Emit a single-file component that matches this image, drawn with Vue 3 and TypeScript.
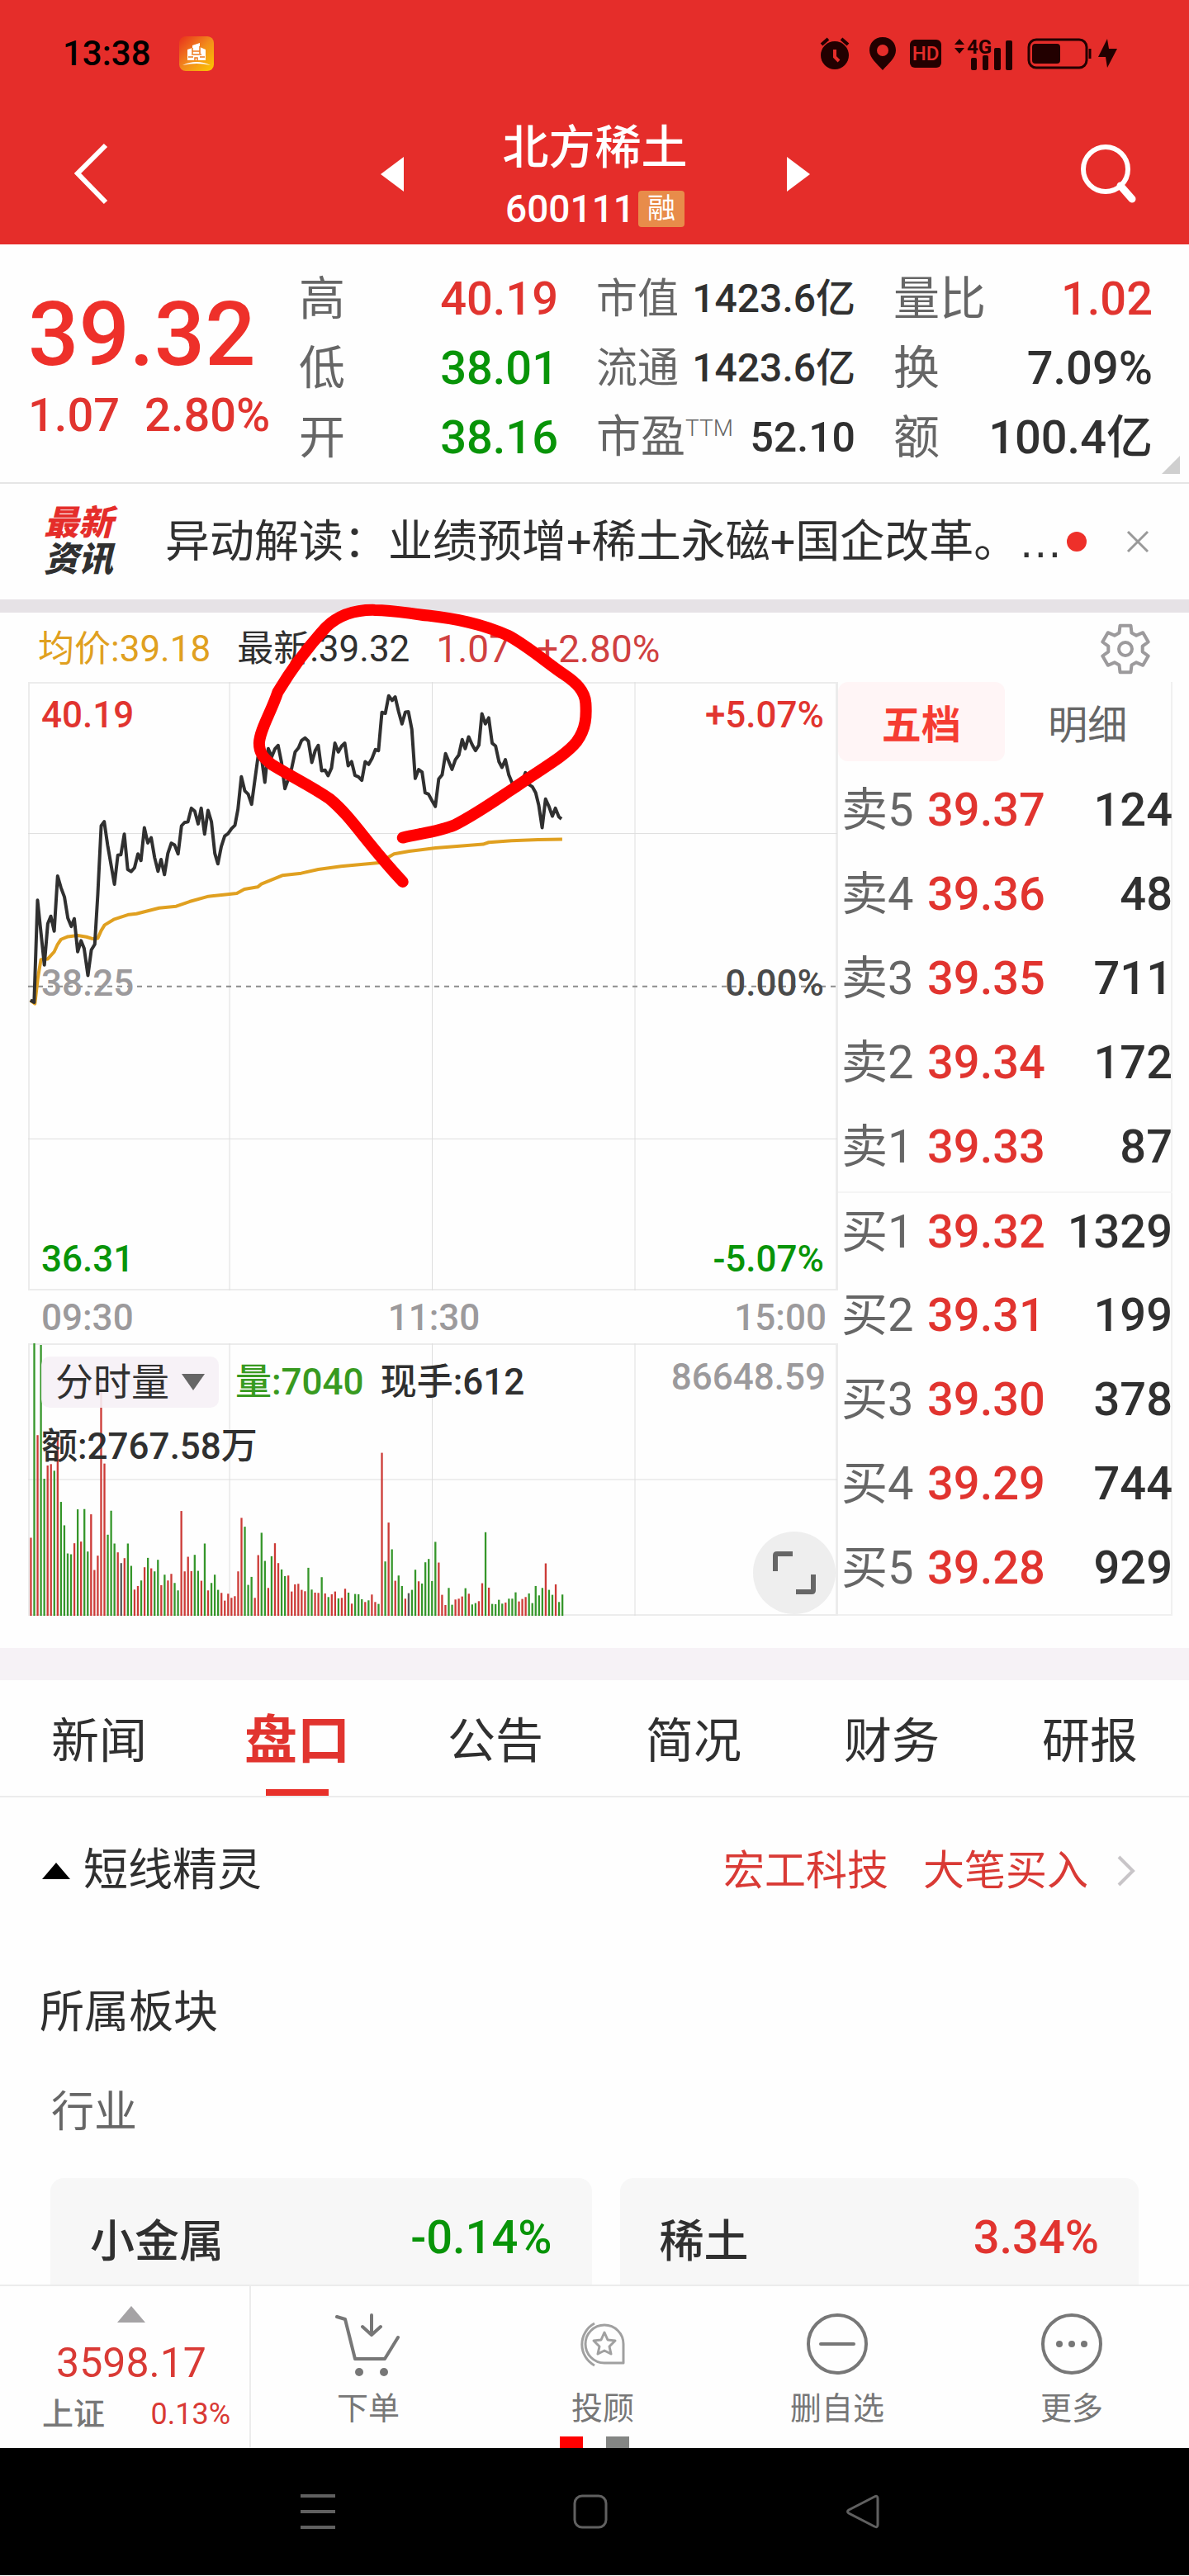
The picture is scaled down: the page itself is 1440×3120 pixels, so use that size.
<script setup lang="ts">
import { ref } from 'vue'

interface Stat { label: string; sup?: string; value: string; tone?: 'up' | 'down' }
interface Level { side: string; price: string; qty: string }

const statColumns: Stat[][] = [
  [
    { label: '高', value: '40.19', tone: 'up' },
    { label: '低', value: '38.01', tone: 'down' },
    { label: '开', value: '38.16', tone: 'down' },
  ],
  [
    { label: '市值', value: '1423.6亿' },
    { label: '流通', value: '1423.6亿' },
    { label: '市盈', sup: 'TTM', value: '52.10' },
  ],
  [
    { label: '量比', value: '1.02', tone: 'up' },
    { label: '换', value: '7.09%' },
    { label: '额', value: '100.4亿' },
  ],
]

const asks: Level[] = [
  { side: '卖5', price: '39.37', qty: '124' },
  { side: '卖4', price: '39.36', qty: '48' },
  { side: '卖3', price: '39.35', qty: '711' },
  { side: '卖2', price: '39.34', qty: '172' },
  { side: '卖1', price: '39.33', qty: '87' },
]
const bids: Level[] = [
  { side: '买1', price: '39.32', qty: '1329' },
  { side: '买2', price: '39.31', qty: '199' },
  { side: '买3', price: '39.30', qty: '378' },
  { side: '买4', price: '39.29', qty: '744' },
  { side: '买5', price: '39.28', qty: '929' },
]

const tabs = ['新闻', '盘口', '公告', '简况', '财务', '研报']
const activeTab = ref('盘口')
const bookTabs = ['五档', '明细']
const activeBook = ref('五档')

const sectors = [
  { name: '小金属', change: '-0.14%', tone: 'down' },
  { name: '稀土', change: '3.34%', tone: 'up' },
]

const priceLine = `80,1443 90,1450 99,1080 117,1315 126,1165 134,1138 143,1192 152,992 161,1035 170,1068 179,1145 188,1175
196,1147 205,1267 214,1227 222,1255 232,1353 241,1260 250,1240 258,1060 267,810 275,795 284,880 302,1022 311,916 319,915
328,840 337,968 346,976 355,962 364,912 372,936 381,817 390,872 399,853 408,925 417,975 425,932 434,987 443,910 452,873
461,880 470,912 479,810 487,798 496,795 505,746 514,757 523,803 531,746 540,840 549,754 558,795 567,910 575,948 584,885
593,847 602,838 611,820 620,808 628,750 637,632 646,683 655,695 664,732 673,640 681,560 690,560 699,652 708,530 717,560
726,530 734,518 743,580 752,675 761,640 770,600 779,542 788,527 796,500 805,491 814,503 823,580 832,537 840,518 849,610
858,608 866,628 875,600 884,510 893,542 902,520 910,510 919,592 928,577 937,627 946,632 955,645 964,577 973,587 982,565
991,533 999,537 1008,398 1017,402 1026,338 1035,355 1043,342 1052,395 1061,440 1070,397 1078,396 1087,460 1096,638
1105,606 1114,615 1122,690 1131,695 1140,718 1149,740 1158,640 1167,625 1176,548 1184,575 1193,605 1202,570 1211,553
1220,497 1228,530 1237,487 1246,515 1255,537 1264,517 1272,403 1281,440 1290,418 1299,510 1308,520 1317,577 1325,598
1334,570 1343,625 1352,655 1361,658 1370,650 1378,650 1387,617 1396,660 1405,668 1414,690 1422,735 1431,817 1440,713
1449,740 1458,775 1466,746 1475,777 1482,785`

const averageLine = `80,1443 92,1455 100,1360 108,1295 126,1293 143,1267 152,1240 161,1222 179,1212 205,1208 228,1213 245,1220
258,1218 267,1190 276,1170 300,1150 340,1132 360,1129 420,1108 465,1102 500,1085 550,1066 600,1059 625,1055 645,1040
680,1032 690,1021 745,990 795,982 840,968 900,957 1000,944 1040,912 1080,902 1150,890 1220,883 1275,877 1290,870
1350,864 1420,860 1484,859`

// One entry per trading minute: r = up, g = down, n = flat, followed by the bar's top.
const volumeBase = 1368
const volumeBars = `r1085 g380 r713 g386 g871 r823 r818 g842 r710 g955 g1040 g1142 g1145 r1105 g982 r1099 g981 g1135 r1000
r1202 r1150 r500 r816 g1074 g987 g1106 r1138 n1177 r1159 g1106 g1187 r1273 r1260 g1240 r1192 g1158 r1196 g1207 g1165
r1257 g1219 r1240 r1216 g1249 g1276 r988 r1207 r1154 r1206 g1147 g1205 r1241 g1106 r1276 g1249 g1219 g1274 r1285 r1313
r1288 r1303 r1297 r1207 r1013 g1045 g1256 g1227 r1303 r1148 g1067 g1169 r1267 g1152 r1105 r1177 g1200 g1224 r1222 r1280
r1254 r1252 r1274 r1279 g1194 g1273 r1284 r1285 g1228 r1287 g1300 r1290 r1280 g1305 r1303 r1270 g1284 r1324 g1289 g1290
g1308 r1318 g1312 r1291 r1318 g1325 r777 g1171 r1030 g1127 r1241 g1222 g1260 r1306 n1286 g1274 g1201 r1243 g1251 g1174
g1162 g1242 g1100 r1175 r1292 r1329 g1267 g1328 r1309 r1306 r1298 g1268 r1288 g1327 g1322 r1315 r1250 g1065 r1266 g1325
g1326 g1310 g1324 r1320 g1306 g1306 g1283 r1316 r1307 r1300 g1287 g1322 g1260 g1294 g1267 r1178 g1274 g1292 r1254 g1318
g1291`
  .split(/\s+/)
  .map((entry, minute) => {
    const top = Number(entry.slice(1))
    return { x: 79 + minute * 8.824, top, height: volumeBase - top, tone: entry[0] }
  })

function gearPath(center: number, root: number, tip: number): string {
  const points: string[] = []
  for (let tooth = 0; tooth < 6; tooth++) {
    const steps: [number, number][] = [[-21, root], [-13, tip], [13, tip], [21, root]]
    for (const [offset, radius] of steps) {
      const angle = ((tooth * 60 + offset - 90) * Math.PI) / 180
      points.push(`${(center + radius * Math.cos(angle)).toFixed(1)} ${(center + radius * Math.sin(angle)).toFixed(1)}`)
    }
  }
  return `M${points.join('L')}Z`
}
const gear = gearPath(31, 21, 29)
</script>

<template>
  <div class="screen">
    <header class="top">
      <div class="status">
        <div class="status-left">
          <span class="clock">13:38</span>
          <svg width="42" height="42" viewBox="0 0 42 42" aria-hidden="true">
            <defs>
              <linearGradient id="appTile" x1="0" y1="0" x2="1" y2="1">
                <stop offset="0" stop-color="#e8301c" />
                <stop offset="0.5" stop-color="#f28a1c" />
                <stop offset="1" stop-color="#fcc800" />
              </linearGradient>
            </defs>
            <rect width="42" height="42" rx="8" fill="url(#appTile)" />
            <path d="M10 16l6-2v-3l9-3v5l7 3v13H10z" fill="#fff" />
            <path d="M16 14v7M25 12v9M16 18h9M15 22h12M11 25h6M25 25h6M19 29v-3h3v3" stroke="#ee7a1c" stroke-width="1.5" fill="none" />
            <path d="M4 35q17-8 34 0-17-4-34 0z" fill="#fff" />
          </svg>
        </div>
        <div class="status-right">
          <svg width="44" height="40" viewBox="0 0 44 40" aria-hidden="true">
            <circle cx="19" cy="22" r="17" fill="#200" />
            <path d="M3 9l8-7M35 9l-8-7" stroke="#200" stroke-width="4" />
            <path d="M19 15v9l5 5" stroke="#e52d2a" stroke-width="4" fill="none" />
          </svg>
          <svg width="34" height="40" viewBox="0 0 34 40" aria-hidden="true">
            <path d="M17 0C7 0 1 7 1 16c0 9 9 16 16 24 7-8 16-15 16-24C33 7 27 0 17 0z" fill="#200" />
            <circle cx="17" cy="16" r="7" fill="#e52d2a" />
          </svg>
          <svg width="38" height="34" viewBox="0 0 38 34" aria-hidden="true">
            <rect width="38" height="34" rx="6" fill="#200" />
            <text x="19" y="25" text-anchor="middle" font-size="24" font-weight="500" fill="#e52d2a">HD</text>
          </svg>
          <svg width="72" height="50" viewBox="0 -6 72 50" aria-hidden="true">
            <path d="M0 8l6-7 6 7zM0 12l6 7 6-7z" fill="#200" />
            <text x="15" y="19" font-size="24" font-weight="700" fill="#200">4G</text>
            <rect x="20" y="24" width="7" height="15" rx="2" fill="#200" />
            <rect x="34" y="21" width="7" height="18" rx="2" fill="#200" />
            <rect x="48" y="12" width="8" height="27" rx="2" fill="#200" />
            <rect x="62" y="3" width="8" height="36" rx="2" fill="#200" />
          </svg>
          <svg width="110" height="38" viewBox="0 0 110 38" aria-hidden="true">
            <rect x="2" y="2" width="70" height="34" rx="9" fill="none" stroke="#200" stroke-width="3" />
            <rect x="6" y="7" width="34" height="24" rx="4" fill="#200" />
            <path d="M76 13v12" stroke="#200" stroke-width="3" />
            <path d="M97 1L86 23h9l2 13 12-23h-10z" fill="#200" />
          </svg>
        </div>
      </div>
      <div class="title-bar">
        <button class="plain" aria-label="返回">
          <svg width="42" height="76" viewBox="0 0 42 76"><path d="M38 3L4 37l34 35" fill="none" stroke="#fff" stroke-width="6" /></svg>
        </button>
        <div class="title-group">
          <button class="plain" aria-label="上一只">
            <svg width="28" height="42" viewBox="0 0 28 42"><path d="M28 0v42L0 21z" fill="#fff" /></svg>
          </button>
          <div class="title">
            <h1>北方稀土</h1>
            <p><span>600111</span><b>融</b></p>
          </div>
          <button class="plain" aria-label="下一只">
            <svg width="28" height="42" viewBox="0 0 28 42"><path d="M0 0v42l28-21z" fill="#fff" /></svg>
          </button>
        </div>
        <button class="plain" aria-label="搜索">
          <svg width="68" height="72" viewBox="0 0 68 72">
            <circle cx="30" cy="30" r="27" fill="none" stroke="#fff" stroke-width="6" />
            <path d="M48 50l14 16" stroke="#fff" stroke-width="9" stroke-linecap="round" />
          </svg>
        </button>
      </div>
    </header>

    <section class="quote">
      <div class="last">
        <strong>39.32</strong>
        <p><span>1.07</span><span>2.80%</span></p>
      </div>
      <dl v-for="(column, c) in statColumns" :key="c" :class="{ compact: c === 1 }">
        <div v-for="stat in column" :key="stat.label">
          <dt>{{ stat.label }}<sup v-if="stat.sup">{{ stat.sup }}</sup></dt>
          <dd :class="stat.tone">{{ stat.value }}</dd>
        </div>
      </dl>
      <svg class="corner" width="22" height="22" viewBox="0 0 22 22" aria-hidden="true"><path d="M22 0v22H0z" fill="#cfcfcf" /></svg>
    </section>

    <section class="news">
      <div class="news-logo"><span>最新</span><span>资讯</span></div>
      <a href="#">异动解读：业绩预增+稀土永磁+国企改革。<span class="dots">…</span></a>
      <i class="unread"></i>
      <button class="plain" aria-label="关闭">
        <svg width="28" height="28" viewBox="0 0 28 28"><path d="M2 2l24 24M26 2L2 26" stroke="#999" stroke-width="3" /></svg>
      </button>
    </section>

    <section class="intraday">
      <div class="summary">
        <span class="avg">均价:39.18</span>
        <span>最新:39.32</span>
        <span class="up">1.07</span>
        <span class="up">+2.80%</span>
        <button class="plain" aria-label="设置">
          <svg width="62" height="62" viewBox="0 0 62 62">
            <path :d="gear" fill="none" stroke="#9c9a9c" stroke-width="4" stroke-linejoin="round" />
            <circle cx="31" cy="31" r="8" fill="none" stroke="#9c9a9c" stroke-width="4" />
          </svg>
        </button>
      </div>

      <div class="panels">
        <div class="charts">
          <div class="price-chart">
            <svg viewBox="74 288 2136 2208" preserveAspectRatio="none" aria-hidden="true">
              <g class="grid">
                <path d="M606 288V2496M1141 288V2496M1676 288V2496M74 838H2210M74 1946H2210" />
                <path class="dash" d="M74 1393H2210" />
              </g>
            </svg>
            <div class="scale">
              <div><span class="up">40.19</span><span class="up">+5.07%</span></div>
              <div class="middle"><span class="muted">38.25</span><span class="mid">0.00%</span></div>
              <div><span class="down">36.31</span><span class="down">-5.07%</span></div>
            </div>
            <svg class="lines" viewBox="74 288 2136 2208" preserveAspectRatio="none" aria-hidden="true">
              <polyline :points="averageLine" stroke="#e0a020" stroke-width="4" />
              <polyline :points="priceLine" stroke="#303030" stroke-width="4" />
              <path
                class="pen"
                d="M1063 853C1110 838 1160 830 1200 807C1260 765 1310 715 1360 670C1420 610 1490 560 1522 505C1548 455 1548 410 1546 365C1544 320 1520 290 1490 262C1440 215 1400 165 1345 122C1270 75 1200 58 1130 47C1080 40 1040 27 990 27C930 25 890 50 860 90C820 150 770 240 733 325C715 400 686 460 684 510C684 545 695 565 720 590C780 640 820 665 870 712C930 780 965 870 1063 1013"
              />
            </svg>
          </div>
          <div class="times"><span>09:30</span><span>11:30</span><span>15:00</span></div>
          <div class="volume-chart">
            <svg viewBox="74 380 2136 988" preserveAspectRatio="none" aria-hidden="true">
              <path class="grid" d="M606 380V1368M1141 380V1368M1676 380V1368M74 874H2210" />
              <rect v-for="(bar, i) in volumeBars" :key="i" :class="bar.tone" :x="bar.x" :y="bar.top" width="5" :height="bar.height" />
            </svg>
            <div class="volume-head">
              <div class="legend">
                <button class="indicator">
                  分时量
                  <svg width="28" height="20" viewBox="0 0 28 20"><path d="M0 0h28L14 20z" fill="#666" /></svg>
                </button>
                <span class="vol">量:7040</span>
                <span>现手:612</span>
                <span>额:2767.58万</span>
              </div>
              <span class="muted">86648.59</span>
            </div>
            <button class="expand" aria-label="全屏">
              <svg width="54" height="54" viewBox="0 0 54 54"><path d="M4 25V6q0-2 2-2h19M50 29v19q0 2-2 2H29" fill="none" stroke="#666" stroke-width="6" /></svg>
            </button>
          </div>
        </div>

        <div class="book">
          <div class="book-tabs">
            <button v-for="tab in bookTabs" :key="tab" :class="{ active: tab === activeBook }" @click="activeBook = tab">{{ tab }}</button>
          </div>
          <table>
            <tbody>
              <tr v-for="row in asks" :key="row.side"><th scope="row">{{ row.side }}</th><td class="up">{{ row.price }}</td><td class="qty">{{ row.qty }}</td></tr>
            </tbody>
            <tbody class="bids">
              <tr v-for="row in bids" :key="row.side"><th scope="row">{{ row.side }}</th><td class="up">{{ row.price }}</td><td class="qty">{{ row.qty }}</td></tr>
            </tbody>
          </table>
        </div>
      </div>
    </section>

    <nav class="tabs">
      <button v-for="tab in tabs" :key="tab" :class="{ active: tab === activeTab }" @click="activeTab = tab">{{ tab }}</button>
    </nav>

    <main>
      <a class="alert" href="#">
        <svg width="34" height="20" viewBox="0 0 34 20" aria-hidden="true"><path d="M17 0l17 20H0z" fill="#000" /></svg>
        <span class="alert-title">短线精灵</span>
        <span class="hit">宏工科技</span>
        <span class="hit">大笔买入</span>
        <svg width="24" height="38" viewBox="0 0 24 38" aria-hidden="true"><path d="M3 2l17 17L3 36" fill="none" stroke="#c8c5c8" stroke-width="4" /></svg>
      </a>
      <h2>所属板块</h2>
      <h3>行业</h3>
      <div class="sectors">
        <a v-for="sector in sectors" :key="sector.name" href="#"><span>{{ sector.name }}</span><b :class="sector.tone">{{ sector.change }}</b></a>
      </div>
    </main>

    <footer class="toolbar">
      <div class="index">
        <svg width="34" height="20" viewBox="0 0 34 20" aria-hidden="true"><path d="M17 0l17 20H0z" fill="#a5a3a5" /></svg>
        <strong>3598.17</strong>
        <p><span>上证</span><em>0.13%</em></p>
      </div>
      <button>
        <svg width="80" height="80" viewBox="0 0 80 80">
          <g fill="none" stroke="#777" stroke-width="4" stroke-linecap="round" stroke-linejoin="round">
            <path d="M2 7l10 3 12 48h36l16-26M44 5v24M33 19l11 10 11-10" />
          </g>
          <circle cx="29" cy="74" r="5" fill="#777" /><circle cx="59" cy="74" r="5" fill="#777" />
        </svg>
        下单
      </button>
      <button>
        <svg width="80" height="80" viewBox="0 0 80 80">
          <g fill="none" stroke="#a0a0a0" stroke-width="3" stroke-linejoin="round">
            <path d="M42 63a23 23 0 1 1 23-23v23zM30 15a29 29 0 0 0 0 51" />
            <path d="M42 26l4 9 9 1-7 7 2 9-8-4-8 4 2-9-7-7 9-1z" />
          </g>
        </svg>
        投顾
      </button>
      <button>
        <svg width="80" height="80" viewBox="0 0 80 80"><circle cx="40" cy="40" r="35" fill="none" stroke="#777" stroke-width="4" /><path d="M20 40h40" stroke="#777" stroke-width="4" stroke-linecap="round" /></svg>
        删自选
      </button>
      <button>
        <svg width="80" height="80" viewBox="0 0 80 80"><circle cx="40" cy="40" r="35" fill="none" stroke="#777" stroke-width="4" /><g fill="#777"><circle cx="25" cy="40" r="4" /><circle cx="40" cy="40" r="4" /><circle cx="55" cy="40" r="4" /></g></svg>
        更多
      </button>
      <div class="pager"><i></i><i></i></div>
    </footer>

    <div class="system">
      <button class="plain" aria-label="最近任务"><svg width="42" height="42" viewBox="0 0 42 42"><path d="M0 2h42M0 21h42M0 40h42" stroke="#606060" stroke-width="4" /></svg></button>
      <button class="plain" aria-label="主屏幕"><svg width="42" height="42" viewBox="0 0 42 42"><rect x="2" y="2" width="38" height="38" rx="9" fill="none" stroke="#606060" stroke-width="3" /></svg></button>
      <button class="plain" aria-label="后退"><svg width="42" height="42" viewBox="0 0 42 42"><path d="M35 3q4-2 4 2v32q0 4-4 2L4 23q-3-2 0-4z" fill="none" stroke="#606060" stroke-width="3" /></svg></button>
    </div>
  </div>
</template>

<style>
body { margin: 0; }
</style>

<style scoped>
.screen {
  font-family: Roboto, "Noto Sans CJK SC", sans-serif;
  color: #303030;
  background: #fefefe;
  white-space: nowrap;
}
.screen * { box-sizing: border-box; }
h1, h2, h3, p, dl, dd { margin: 0; font-weight: 400; }
svg { display: block; flex: none; }
button { font-family: inherit; color: inherit; border: 0; background: none; padding: 0; margin: 0; }
a { color: inherit; text-decoration: none; }
.up { color: #e1342f; }
.down { color: #089408; }
.muted { color: #9c9a9c; }
.mid { color: #4a4a4a; }

.top { background: #e52d2a; }
.status { display: flex; justify-content: space-between; align-items: center; height: 130px; padding: 0 86px 0 76px; }
.status-left { display: flex; align-items: center; gap: 34px; }
.clock { font-size: 42px; font-weight: 500; color: #000; line-height: 48px; }
.status-right { display: flex; align-items: center; gap: 16px; }
.title-bar { display: grid; grid-template-columns: auto 1fr auto; align-items: center; height: 166px; padding: 0 63px 4px 90px; color: #fff; }
.title-group { display: flex; justify-content: center; align-items: center; gap: 120px; }
.title { padding-top: 4px; text-align: center; }
.title h1 { font-size: 56px; font-weight: 500; line-height: 80px; }
.title p { display: flex; justify-content: center; align-items: center; gap: 4px; line-height: 68px; font-size: 46px; font-weight: 500; }
.title b { width: 56px; height: 44px; line-height: 42px; border-radius: 4px; background: #e88c4a; font-size: 34px; font-weight: 400; }

.quote { position: relative; display: grid; grid-template-columns: 278px 1fr 1fr 1fr; column-gap: 50px; padding: 24px 48px 12px 34px; border-bottom: 2px solid #e5e5e5; }
.last { padding-top: 25px; color: #e1342f; font-weight: 500; }
.last strong { display: block; font-size: 108px; line-height: 120px; font-weight: 500; color: #ee302a; }
.last p { display: flex; gap: 30px; font-size: 56px; line-height: 76px; font-weight: 500; }
.quote dl { margin-right: -4px; }
.quote dl div { display: flex; justify-content: space-between; height: 84px; line-height: 84px; font-size: 56px; }
.quote dt { color: #666; }
.quote dd { font-weight: 500; }
.quote .compact div { font-size: 50px; }
.quote .compact dd { font-size: 48px; }
.quote .compact div:last-child { font-size: 54px; }
.quote .compact div:last-child dd { font-size: 50px; }
.quote sup { font-size: 28px; line-height: 28px; vertical-align: 20px; font-weight: 300; }
.corner { position: absolute; right: 11px; bottom: 10px; }

.news { display: flex; align-items: center; height: 140px; padding: 0 48px 0 53px; }
.news-logo { display: flex; flex-direction: column; width: 147px; font-size: 42px; line-height: 44px; font-weight: 900; font-style: italic; }
.news-logo span:first-child { color: #e52d2a; }
.news a { flex: 1; font-size: 54px; line-height: 80px; }
.dots { font-family: "Liberation Sans", sans-serif; }
.unread { width: 24px; height: 24px; border-radius: 50%; background: #ee302a; margin-right: 48px; }

.intraday { border-top: 16px solid #e6e2e6; padding-bottom: 39px; }
.summary { display: flex; align-items: center; height: 84px; padding: 4px 46px 0; font-size: 44px; line-height: 60px; gap: 32px; }
.summary .avg { color: #e0a020; }
.summary .up { font-size: 46px; color: #d04040; }
.summary button { margin-left: auto; }
.panels { display: grid; grid-template-columns: minmax(0, 1fr) 405px; padding: 0 20px 0 34px; }
.price-chart, .volume-chart { position: relative; border: 2px solid #ececec; border-right-width: 3px; }
.price-chart { height: 737px; }
.volume-chart { height: 330px; }
.price-chart > svg, .volume-chart > svg { position: absolute; inset: -2px; width: calc(100% + 4px); height: calc(100% + 4px); }
.grid, .grid path { fill: none; stroke: #dedede; stroke-width: 1; vector-effect: non-scaling-stroke; }
.grid .dash { stroke: #8c8c8c; stroke-width: 2; stroke-dasharray: 6 6; }
.price-chart .lines { overflow: visible; pointer-events: none; z-index: 1; }
.lines * { fill: none; stroke-linejoin: round; vector-effect: non-scaling-stroke; }
.lines .pen { stroke: #f00; stroke-width: 14; stroke-linecap: round; }
.scale { position: absolute; inset: 0; display: flex; flex-direction: column; justify-content: space-between; padding: 10px 14px 8px; font-size: 44px; line-height: 56px; font-weight: 500; }
.scale div { display: flex; justify-content: space-between; }
.scale .middle { padding-bottom: 10px; }
.times { display: flex; justify-content: space-between; height: 64px; padding: 0 14px 0 16px; font-size: 44px; line-height: 66px; font-weight: 500; color: #9c9a9c; }
.r { fill: #cc3a36; }
.g { fill: #35962a; }
.n { fill: #555; }
.volume-head { position: relative; display: flex; justify-content: space-between; padding: 14px 12px 0 14px; font-size: 44px; font-weight: 500; }
.volume-head > .muted { line-height: 50px; }
.legend { flex: 1; display: flex; flex-wrap: wrap; gap: 16px 20px; line-height: 62px; }
.indicator { display: flex; align-items: center; gap: 15px; height: 62px; padding: 0 17px; border-radius: 10px; background: rgba(246, 241, 246, 0.9); font-size: 46px; line-height: 62px; }
.vol { color: #389a20; }
.expand { position: absolute; right: 0; bottom: 0; display: grid; place-items: center; width: 100px; height: 100px; border-radius: 50%; background: #eee; }

.book { border-right: 2px solid #f0f0f0; border-bottom: 2px solid #f0f0f0; }
.book-tabs { display: grid; grid-template-columns: 1fr 1fr; height: 96px; margin-bottom: 12px; }
.book-tabs button { font-size: 48px; color: #666; border-radius: 12px; }
.book-tabs .active { background: #fff5f6; color: #f53c32; font-weight: 700; }
.book table { width: calc(100% + 2px); border-collapse: collapse; table-layout: fixed; }
.book th, .book td { height: 102px; padding: 0 0 8px; font-size: 56px; line-height: 90px; font-weight: 500; text-align: left; }
.book th { width: 108px; padding-left: 4px; font-weight: 400; color: #666; }
.book .qty { text-align: right; }
.bids { border-top: 2px solid #f5f5f5; }

.tabs { display: grid; grid-template-columns: repeat(6, 1fr); border-top: 39px solid #f6f2f6; border-bottom: 2px solid #ececec; }
.tabs button { position: relative; height: 140px; padding-top: 8px; font-size: 58px; line-height: 80px; }
.tabs .active { color: #e1342f; font-size: 64px; font-weight: 700; }
.tabs .active::after { content: ""; position: absolute; left: 50%; bottom: 0; width: 76px; height: 8px; margin-left: -38px; background: #e8302a; }

.alert { display: flex; align-items: center; height: 176px; padding: 2px 64px 0 51px; font-size: 54px; line-height: 80px; }
.alert-title { flex: 1; margin-left: 16px; }
.hit { margin-right: 42px; font-size: 50px; color: #d93a35; }
.alert svg:last-child { margin-left: -8px; }
h2 { padding: 4px 0 0 48px; font-size: 54px; line-height: 162px; }
h3 { padding-left: 62px; font-size: 52px; line-height: 80px; color: #666; }
.sectors { display: grid; grid-template-columns: 655fr 628fr; gap: 34px; margin-top: 39px; padding: 0 61px; }
.sectors a { display: flex; justify-content: space-between; align-items: center; height: 144px; padding: 0 48px; border-radius: 16px; background: #f7f7f7; font-size: 54px; font-weight: 500; }
.sectors b { font-size: 56px; font-weight: 500; }

.toolbar { position: relative; display: grid; grid-template-columns: 304px repeat(4, 1fr); height: 198px; margin-top: -15px; border-top: 2px solid #ececec; background: #fefefe; color: #777; }
.index { display: flex; flex-direction: column; align-items: center; padding: 24px 23px 0 39px; border-right: 2px solid #ececec; }
.index strong { margin-top: 17px; font-size: 50px; line-height: 64px; font-weight: 400; color: #d93a35; }
.index p { display: flex; justify-content: space-between; align-self: stretch; margin-top: 10px; padding-left: 12px; font-size: 38px; line-height: 40px; }
.index p span { font-weight: 500; }
.index em { font-size: 36px; font-style: normal; color: #d93a35; }
.toolbar button { display: flex; flex-direction: column; align-items: center; gap: 18px; padding-top: 30px; font-size: 38px; line-height: 40px; }
.pager { position: absolute; inset: auto 0 0; display: flex; justify-content: center; gap: 28px; }
.pager i { width: 28px; height: 14px; background: #f00; }
.pager i + i { background: #848684; }

.system { display: flex; justify-content: center; align-items: center; gap: 288px; height: 154px; padding-right: 10px; background: #000; }
</style>
